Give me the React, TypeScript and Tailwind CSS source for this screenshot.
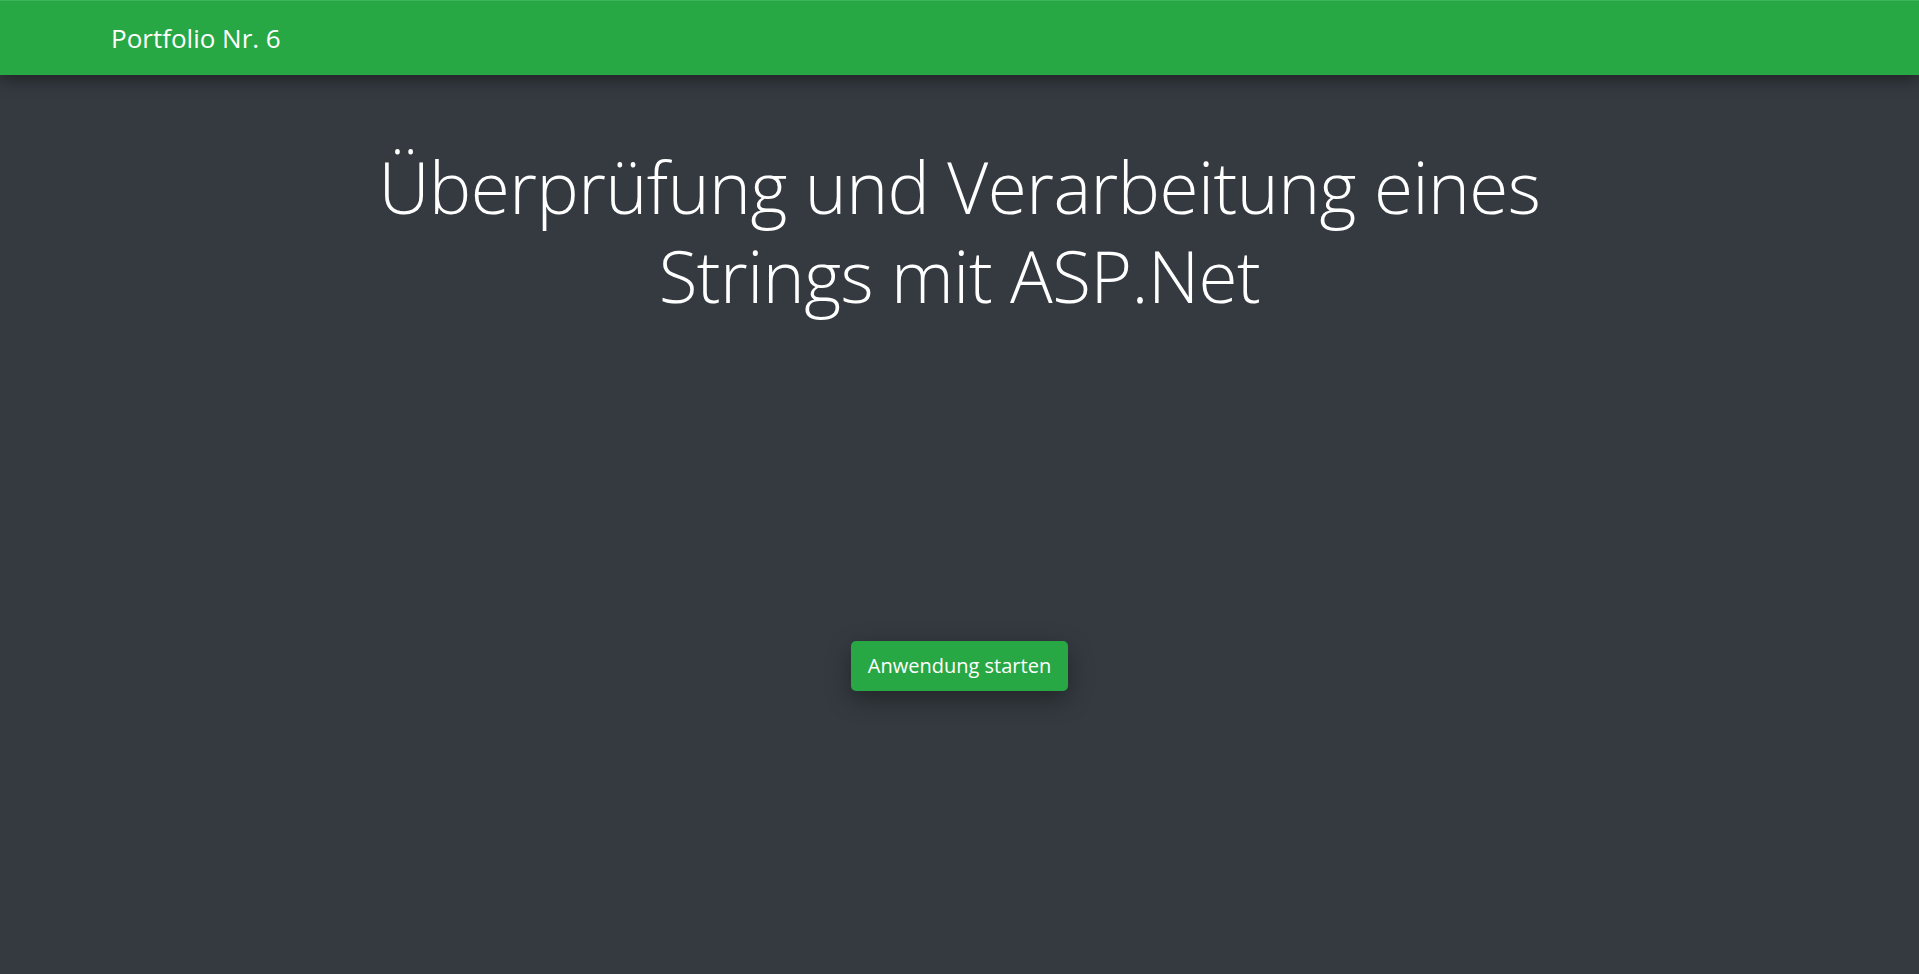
import React from "react";

export default function App() {
  return (
    <div
      className="min-h-[974px] w-full bg-[#343a40] flex flex-col"
      style={{ fontFamily: '"Open Sans", "Noto Sans", sans-serif' }}
    >
      <nav className="h-[75px] bg-[#28a745] border-t border-[#3cb55a] flex items-center pl-[111px] shadow-[0_6px_16px_rgba(0,0,0,0.35)] relative z-10">
        <span className="text-white text-[26px] leading-none">Portfolio Nr. 6</span>
      </nav>
      <main className="flex flex-col items-center">
        <h1 className="mt-[67px] text-center text-white font-light text-[71px] leading-[89px] tracking-[-0.5px]">
          Überprüfung und Verarbeitung eines
          <br />
          Strings mit ASP.Net
        </h1>
        <button className="mt-[321px] h-[50px] w-[217px] rounded-[5px] bg-[#28a745] text-white text-[20px] shadow-[0_8px_24px_rgba(0,0,0,0.35)]">
          Anwendung starten
        </button>
      </main>
    </div>
  );
}
